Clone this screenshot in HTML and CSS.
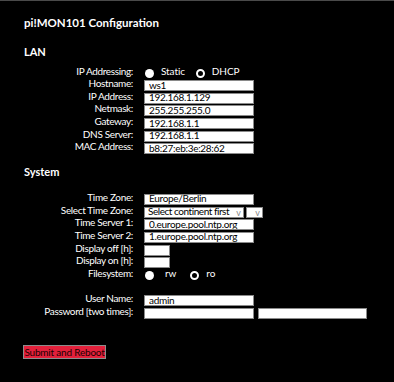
FILE: index.html
```html
<!DOCTYPE html>
<html>
<head>
<meta charset="utf-8">
<link rel="stylesheet" href="styles.css">
</head>
<body>
<div class="page">
  <h1 class="title">pi!MON101 Configuration</h1>

  <h2 class="section">LAN</h2>
  <div class="form lan">
    <div class="lbl">IP Addressing:</div>
    <div class="field radios">
      <span class="radio on"></span><span class="rtext static">Static</span>
      <span class="radio off"></span><span class="rtext">DHCP</span>
    </div>
    <div class="lbl">Hostname:</div>
    <div class="field"><input class="txt" value="ws1"></div>
    <div class="lbl">IP Address:</div>
    <div class="field"><input class="txt" value="192.168.1.129"></div>
    <div class="lbl">Netmask:</div>
    <div class="field"><input class="txt" value="255.255.255.0"></div>
    <div class="lbl">Gateway:</div>
    <div class="field"><input class="txt" value="192.168.1.1"></div>
    <div class="lbl">DNS Server:</div>
    <div class="field"><input class="txt" value="192.168.1.1"></div>
    <div class="lbl">MAC Address:</div>
    <div class="field"><input class="txt" value="b8:27:eb:3e:28:62"></div>
  </div>

  <h2 class="section system">System</h2>
  <div class="form sys">
    <div class="lbl">Time Zone:</div>
    <div class="field"><input class="txt" value="Europe/Berlin"></div>
    <div class="lbl">Select Time Zone:</div>
    <div class="field sels">
      <div class="sel wide"><span class="seltext">Select continent first</span><span class="arr">v</span></div>
      <div class="sel narrow"><span class="arr">v</span></div>
    </div>
    <div class="lbl">Time Server 1:</div>
    <div class="field"><input class="txt" value="0.europe.pool.ntp.org"></div>
    <div class="lbl">Time Server 2:</div>
    <div class="field"><input class="txt" value="1.europe.pool.ntp.org"></div>
    <div class="lbl">Display off [h]:</div>
    <div class="field"><input class="txt small" value=""></div>
    <div class="lbl">Display on [h]:</div>
    <div class="field"><input class="txt small" value=""></div>
    <div class="lbl">Filesystem:</div>
    <div class="field radios">
      <span class="radio on"></span><span class="rtext rw">rw</span>
      <span class="radio off"></span><span class="rtext">ro</span>
    </div>
    <div class="lbl blank"></div>
    <div class="field"></div>
    <div class="lbl">User Name:</div>
    <div class="field"><input class="txt" value="admin"></div>
    <div class="lbl">Password [two times]:</div>
    <div class="field pw">
      <input class="txt" type="password" value="">
      <input class="txt pw2" type="password" value="">
    </div>
  </div>

  <button class="submit">Submit and Reboot</button>
</div>
</body>
</html>
```
FILE: styles.css
```css
html, body {
  margin: 0;
  padding: 0;
  background: #000;
}
body {
  border-top: 1px solid #4a4a4a;
  height: 381px;
  overflow: hidden;
  font-family: Lato, "Open Sans", sans-serif;
  color: #fff;
}
.page {
  padding-left: 24px;
}
.title {
  margin: 16px 0 0 0;
  font-size: 11.5px;
  line-height: 12px;
  font-weight: 700;
}
.section {
  margin: 17px 0 0 0;
  font-size: 11px;
  line-height: 12px;
  font-weight: 700;
}
.section.system {
  margin-top: 12px;
}
.form {
  display: grid;
  grid-template-columns: 109px auto;
  column-gap: 11px;
  row-gap: 1.67px;
  grid-auto-rows: 11px;
  margin-top: 9.5px;
}
.form.sys {
  margin-top: 15.5px;
}
.lbl {
  text-align: right;
  font-size: 10px;
  line-height: 7px;
  letter-spacing: -0.35px;
  white-space: nowrap;
  align-self: start;
}
.field {
  display: flex;
  align-items: center;
  height: 11px;
}
.txt {
  box-sizing: border-box;
  width: 110px;
  height: 11px;
  margin: 0;
  padding: 0 4px 2px 4px;
  border: 1px solid #8a8a8a;
  background: #fff;
  color: #000;
  font-family: Lato, "Open Sans", sans-serif;
  font-size: 10px;
  letter-spacing: -0.3px;
  outline: none;
}
.txt.small {
  width: 26px;
}
.pw {
  gap: 4px;
}
.pw .pw2 {
  width: 109px;
}
.radios {
  align-items: flex-start;
}
.radio {
  box-sizing: border-box;
  display: inline-block;
  width: 9px;
  height: 9px;
  border-radius: 50%;
  margin-left: 1px;
  margin-top: 1px;
  flex: none;
}
.radio.on {
  background: #fff;
}
.radio.off {
  border: 2.5px solid #fff;
  background: #000;
}
.rtext {
  font-size: 10px;
  line-height: 7px;
  margin-left: 7px;
  margin-right: 10px;
  letter-spacing: -0.1px;
}
.rtext.rw {
  margin-left: 11px;
  margin-right: 13px;
}
.sels {
  gap: 2px;
}
.sel {
  box-sizing: border-box;
  height: 11px;
  border: 1px solid #8a8a8a;
  background: #fff;
  color: #000;
  font-size: 10px;
  display: flex;
  align-items: center;
  justify-content: space-between;
  padding: 0 2px 0 3px;
  letter-spacing: -0.45px;
  white-space: nowrap;
}
.seltext {
  line-height: 9px;
  padding-bottom: 1px;
}
.sel.wide {
  width: 100px;
}
.sel.narrow {
  width: 17px;
  justify-content: flex-end;
}
.sel .arr {
  color: #888;
  font-size: 9px;
  line-height: 9px;
  letter-spacing: 0;
}
.submit {
  display: block;
  box-sizing: border-box;
  margin: 26.5px 0 0 -1px;
  width: 83px;
  height: 14px;
  padding: 0;
  border: 1px solid #8c8c8c;
  background: #e3203b;
  color: #1a0000;
  font-family: Lato, "Open Sans", sans-serif;
  font-size: 10px;
  line-height: 12px;
  letter-spacing: -0.2px;
}
```
